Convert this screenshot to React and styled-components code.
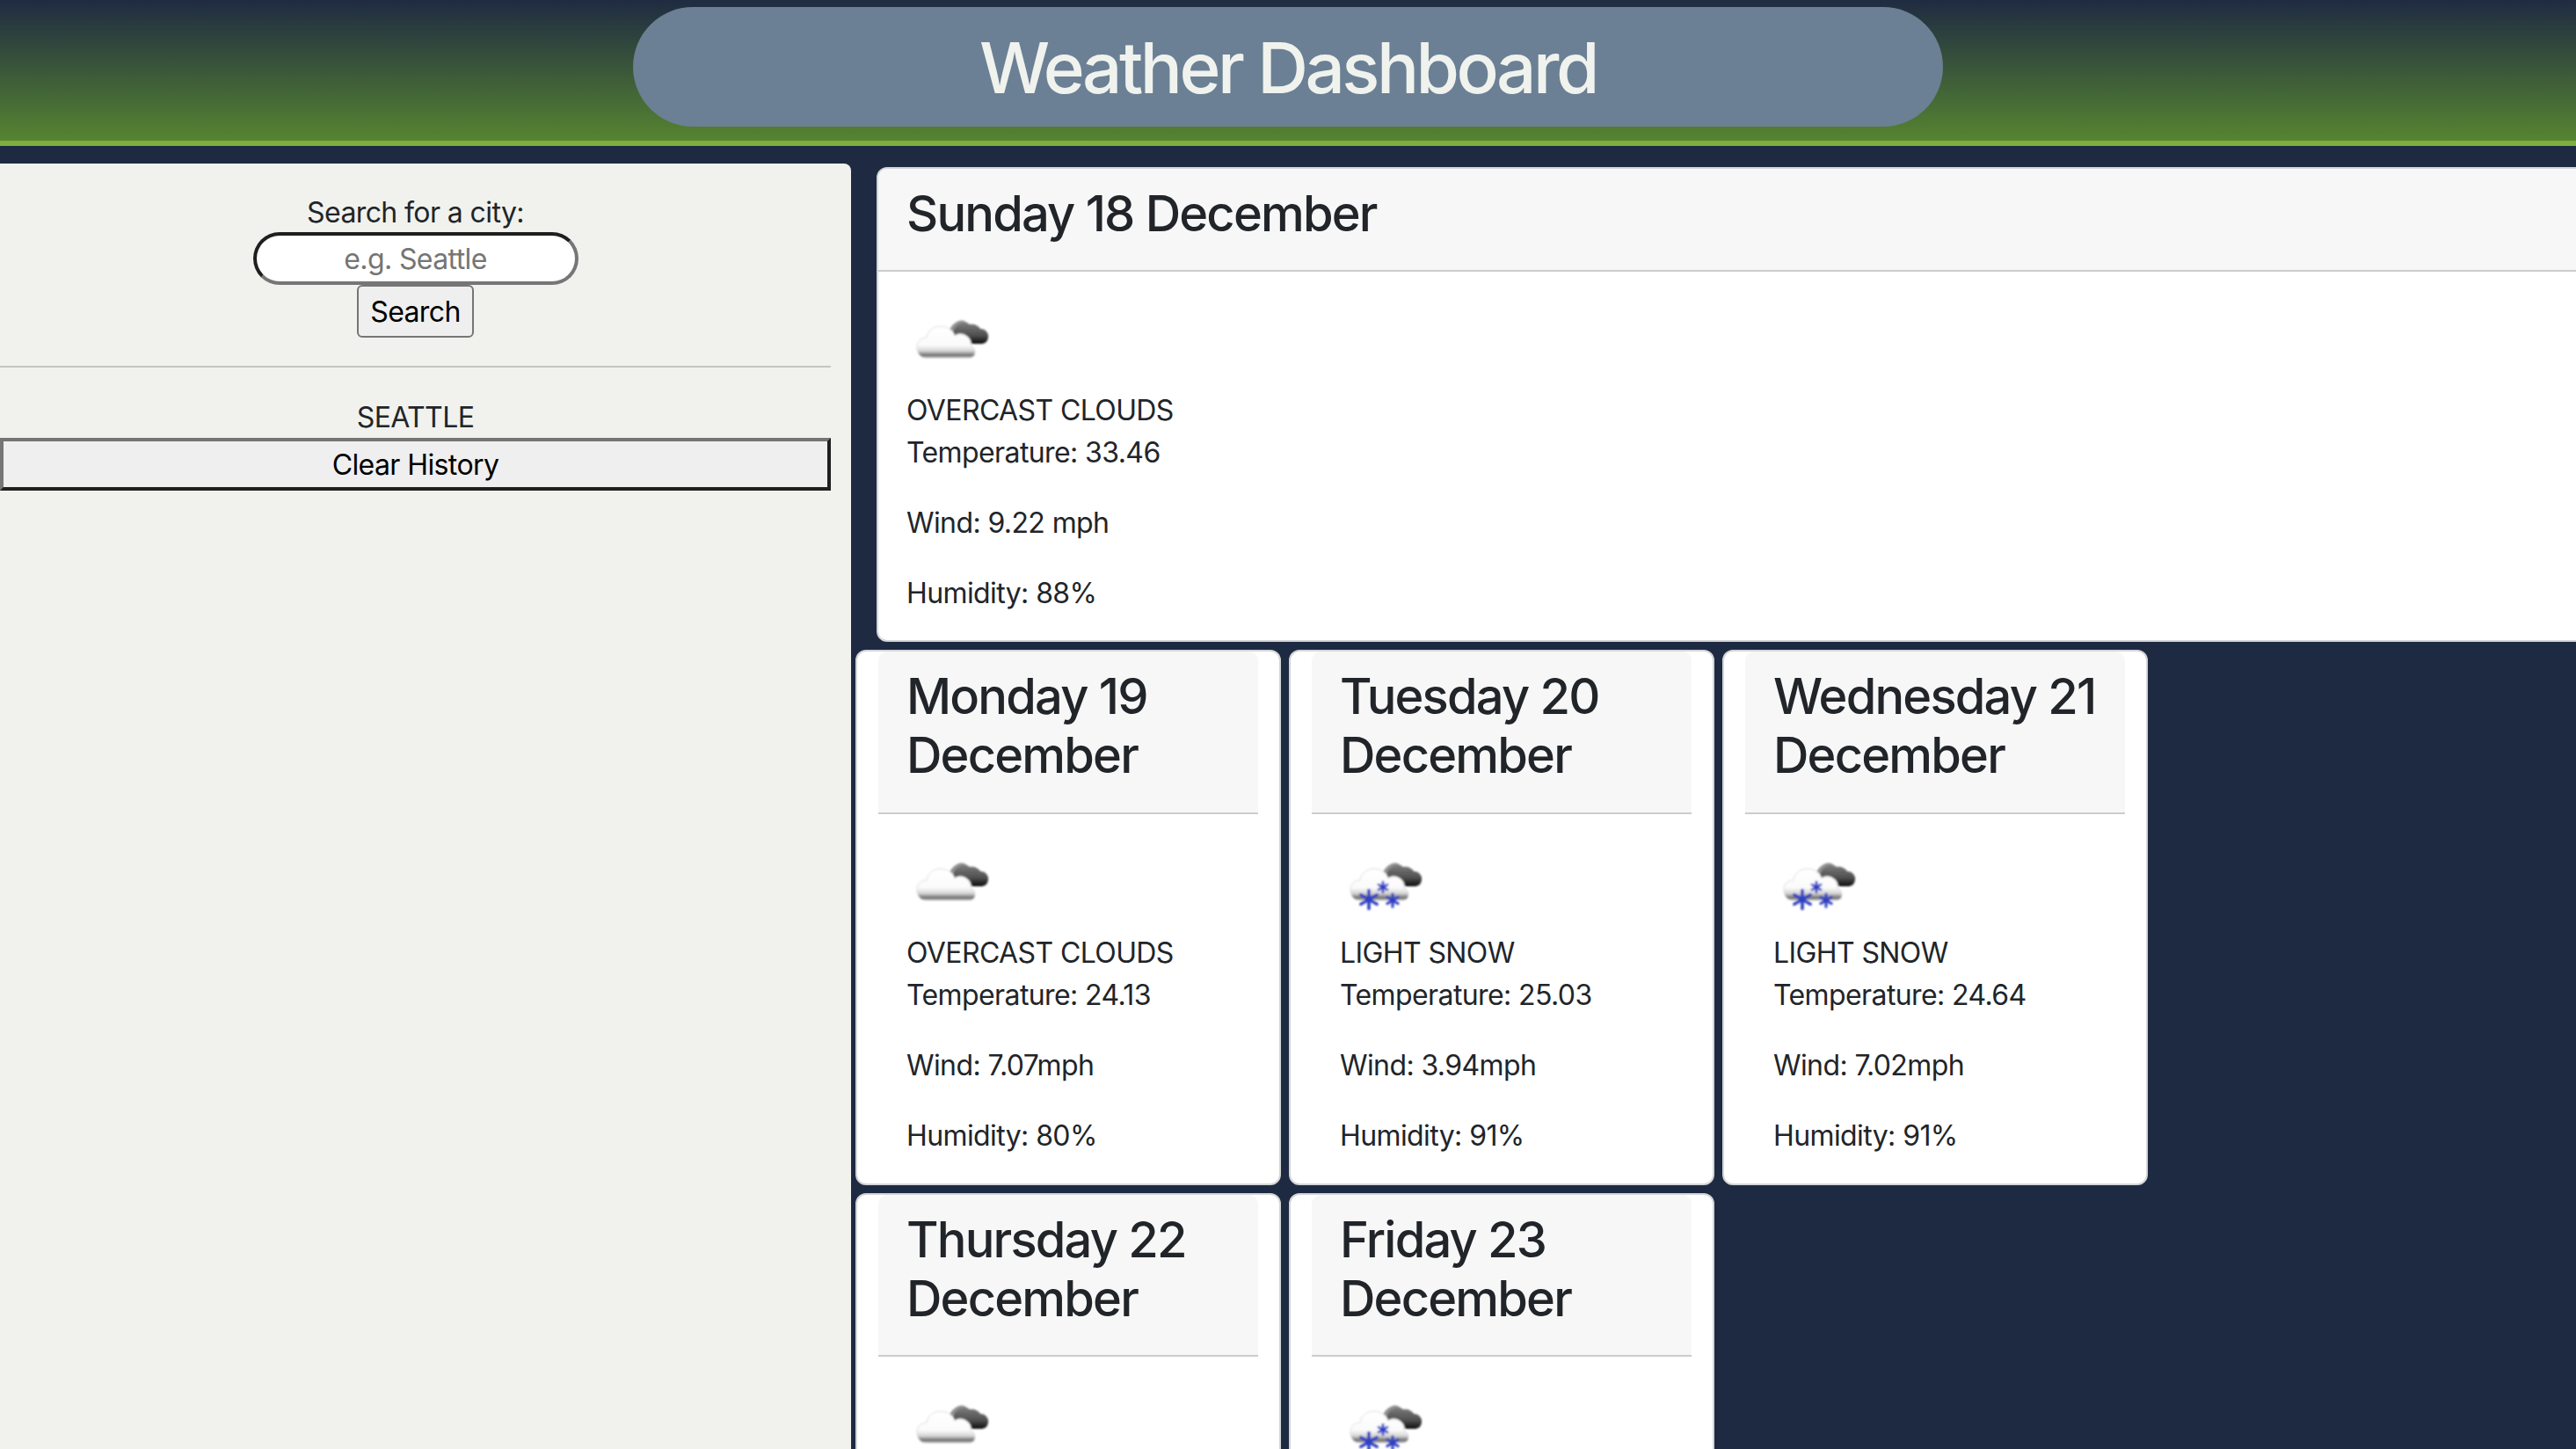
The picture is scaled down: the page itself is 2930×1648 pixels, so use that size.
import React from "react";
import styled, { createGlobalStyle } from "styled-components";

const Global = createGlobalStyle`
  html, body { margin: 0; padding: 0; height: 100%; overflow: hidden; background: #1e2a42; }
  body { font-family: Inter, "Noto Sans", sans-serif; font-size: 32px; line-height: 48px; color: #212529; letter-spacing: -0.6px; }
  #root { height: 100%; }
  * { box-sizing: border-box; }
`;

const Page = styled.div`
  display: flex;
  flex-direction: column;
  height: 1648px;
  overflow: hidden;
`;
const Header = styled.header`
  flex: 0 0 166px;
  display: flex;
  justify-content: center;
  padding-top: 8px;
  background: linear-gradient(180deg, #1f2b42 0%, #568431 100%);
  border-bottom: 6px solid #7fae3f;
`;
const TitlePill = styled.h1`
  margin: 0;
  width: 1490px;
  height: 136px;
  border-radius: 68px;
  background: #6b8094;
  color: #f0f2ee;
  font-size: 80px;
  line-height: 138px;
  font-weight: 500;
  text-align: center;
  letter-spacing: -3.5px;
`;
const Main = styled.main`
  flex: 1;
  display: flex;
  min-height: 0;
`;
const Sidebar = styled.aside`
  flex: 0 0 968px;
  margin-top: 20px;
  padding-top: 32px;
  padding-right: 23px;
  background: #f1f2ee;
  border-top-right-radius: 8px;
  text-align: center;
`;
const SearchForm = styled.form`
  display: flex;
  flex-direction: column;
  align-items: center;
  padding-bottom: 32px;
  border-bottom: 2px solid #c4c5c2;
`;
const Label = styled.label`
  display: block;
  height: 46px;
`;
const CityInput = styled.input`
  width: 370px;
  height: 60px;
  border-radius: 30px;
  border: 4px solid;
  border-color: #1f1f1f #767676 #767676 #1f1f1f;
  background: #fff;
  font: inherit;
  letter-spacing: inherit;
  text-align: center;
  padding: 0 8px;
  &::placeholder { color: #757575; opacity: 1; }
`;
const SearchButton = styled.button`
  width: 133px;
  height: 60px;
  padding: 2px 0 0;
  border: 2px solid #767676;
  border-radius: 6px;
  background: #efefef;
  color: #000;
  font: inherit;
  letter-spacing: inherit;
`;
const History = styled.div`
  padding-top: 33px;
`;
const HistoryItem = styled.div`
  height: 47px;
`;
const ClearButton = styled.button`
  display: block;
  width: 100%;
  height: 60px;
  padding: 2px 0 0;
  border: 4px solid;
  border-color: #767676 #1f1f1f #1f1f1f #767676;
  background: #efefef;
  color: #000;
  font: inherit;
  letter-spacing: inherit;
`;
const Content = styled.section`
  flex: 0 0 auto;
  width: 2400px;
  margin-left: 5px;
  padding-top: 24px;
`;
const Card = styled.article`
  background: #fff;
  border: 2px solid #d3d5d8;
  border-radius: 12px;
`;
const TodayCard = styled(Card)`
  margin-left: 24px;
  margin-bottom: 9px;
`;
const ForecastGrid = styled.div`
  display: flex;
  flex-wrap: wrap;
  gap: 9px;
  width: 1480px;
`;
const ForecastCard = styled(Card)`
  flex: 0 0 484px;
  padding: 0 24px;
`;
const CardHeader = styled.div`
  padding: 18px 32px 30px;
  background: #f7f7f7;
  border-bottom: 2px solid #cbcccd;
  border-radius: 10px 10px 0 0;
`;
const DayTitle = styled.h3`
  margin: 0;
  font-size: 56px;
  line-height: 67.2px;
  font-weight: 500;
  letter-spacing: -1.8px;
`;
const CardBody = styled.div`
  padding: 32px 32px ${(p) => (p.$today ? "29px" : "30px")};
`;
const IconWrap = styled.div`
  height: 102px;
`;
const Condition = styled.div`
  text-transform: uppercase;
`;
const Stat = styled.p`
  margin: 0 0 32px;
  &:last-child { margin-bottom: 0; }
`;

const CLOUD = "M10 66 C3 66 0 60 0 54 C0 47 5 43 11 43 C12 35 19 30 27 30 C35 30 41 35 43 41 C46 38 52 38 56 41 C60 43 62 48 61 52 C65 53 66 57 66 60 C66 64 63 66 59 66 Z";

const Flake = ({ cx, cy, r, sw }) => (
  <g stroke="#2f3fc4" strokeWidth={sw} strokeLinecap="round">
    {[0, 60, 120].map((a) => (
      <line key={a} x1={cx} y1={cy - r} x2={cx} y2={cy + r} transform={`rotate(${a} ${cx} ${cy})`} />
    ))}
    <circle cx={cx} cy={cy} r={r * 0.32} fill="#2f3fc4" stroke="none" />
  </g>
);

const WeatherIcon = ({ id, snow }) => (
  <svg width="100" height="100" viewBox="0 0 100 100" style={{ display: "block" }}>
    <defs>
      <linearGradient id={`dark${id}`} x1="0" y1="0" x2="0" y2="1">
        <stop offset="0" stopColor="#7d7d7d" />
        <stop offset="0.6" stopColor="#505050" />
        <stop offset="1" stopColor="#0d0d0d" />
      </linearGradient>
      <linearGradient id={`light${id}`} x1="0" y1="0" x2="0" y2="1">
        <stop offset="0" stopColor="#fff" />
        <stop offset="0.6" stopColor="#fbfbfb" />
        <stop offset="0.78" stopColor="#d5d5d5" />
        <stop offset="0.92" stopColor="#707070" />
        <stop offset="1" stopColor="#a8a8a8" />
      </linearGradient>
      <filter id={`soft${id}`} x="-10%" y="-10%" width="120%" height="120%">
        <feGaussianBlur stdDeviation="0.8" />
      </filter>
    </defs>
    <g filter={`url(#soft${id})`}>
      <path
        d="M60 49 C52 46 50 36 56 30 C60 25 68 24 72 28 C76 27 82 29 84 33 C90 33 94 38 93 43 C92 48 89 50 85 50 L72 50 Z"
        fill={`url(#dark${id})`}
      />
      <path d="M47 41 C48 33 53 26 60 24 C64 23 67 24 69 26 C62 25 54 30 50 40 Z" fill="#8f8f8f" />
      <g transform="translate(12 0)">
        <path d={CLOUD} fill={`url(#light${id})`} stroke="#dcdcdc" strokeWidth="1" />
      </g>
      {snow && (
        <>
          <Flake cx={33} cy={65} r={10.5} sw={3.6} />
          <Flake cx={49} cy={51} r={5.8} sw={2.8} />
          <Flake cx={60} cy={66} r={7.2} sw={3} />
        </>
      )}
    </g>
  </svg>
);

const forecast = [
  { day: "Monday 19 December", cond: "Overcast clouds", t: "24.13", w: "7.07mph", h: "80%", snow: false },
  { day: "Tuesday 20 December", cond: "Light snow", t: "25.03", w: "3.94mph", h: "91%", snow: true },
  { day: "Wednesday 21 December", cond: "Light snow", t: "24.64", w: "7.02mph", h: "91%", snow: true },
  { day: "Thursday 22 December", cond: "Overcast clouds", t: "24.5", w: "6.5mph", h: "85%", snow: false },
  { day: "Friday 23 December", cond: "Light snow", t: "26.1", w: "4.1mph", h: "90%", snow: true },
];

const Details = ({ id, cond, t, w, h, snow, today }) => (
  <CardBody $today={today}>
    <IconWrap>
      <WeatherIcon id={id} snow={snow} />
    </IconWrap>
    <Condition>{cond}</Condition>
    <Stat>Temperature: {t}</Stat>
    <Stat>Wind: {w}</Stat>
    <Stat>Humidity: {h}</Stat>
  </CardBody>
);

export default function App() {
  return (
    <Page>
      <Global />
      <Header>
        <TitlePill>Weather Dashboard</TitlePill>
      </Header>
      <Main>
        <Sidebar>
          <SearchForm onSubmit={(e) => e.preventDefault()}>
            <Label htmlFor="city">Search for a city:</Label>
            <CityInput id="city" placeholder="e.g. Seattle" />
            <SearchButton type="submit">Search</SearchButton>
          </SearchForm>
          <History>
            <HistoryItem>SEATTLE</HistoryItem>
            <ClearButton type="button">Clear History</ClearButton>
          </History>
        </Sidebar>
        <Content>
          <TodayCard>
            <CardHeader>
              <DayTitle>Sunday 18 December</DayTitle>
            </CardHeader>
            <Details id="today" today cond="Overcast clouds" t="33.46" w="9.22 mph" h="88%" />
          </TodayCard>
          <ForecastGrid>
            {forecast.map((f, i) => (
              <ForecastCard key={f.day}>
                <CardHeader>
                  <DayTitle>{f.day}</DayTitle>
                </CardHeader>
                <Details id={`f${i}`} cond={f.cond} t={f.t} w={f.w} h={f.h} snow={f.snow} />
              </ForecastCard>
            ))}
          </ForecastGrid>
        </Content>
      </Main>
    </Page>
  );
}
